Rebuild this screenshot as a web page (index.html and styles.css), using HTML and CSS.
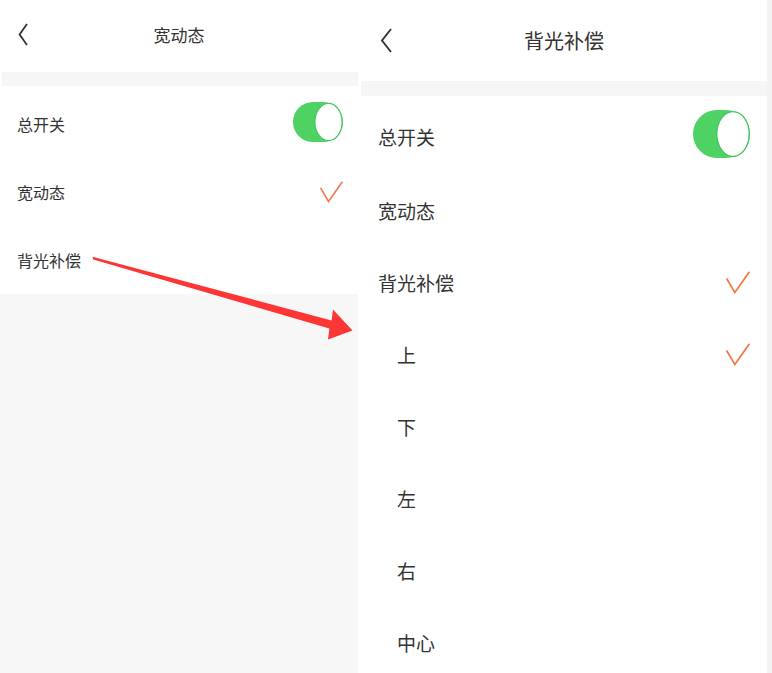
FILE: index.html
```html
<!DOCTYPE html>
<html lang="zh-CN">
<head>
<meta charset="utf-8">
<title>宽动态 / 背光补偿</title>
<link rel="stylesheet" href="styles.css">
</head>
<body>
<div class="page">
  <section class="panel panel-left">
    <header class="header">
      <svg class="back" width="10" height="23" viewBox="0 0 10 23"><polyline points="9,1 1.6,11.5 9,22" fill="none" stroke="#333" stroke-width="1.8" stroke-linejoin="miter"/></svg>
      <h1 class="title">宽动态</h1>
      <span></span>
    </header>
    <div class="band"></div>
    <ul class="list">
      <li class="row row-first">
        <span class="label">总开关</span>
        <svg width="50" height="40" viewBox="0 0 50 40"><rect x="0" y="0" width="50" height="40" rx="20" fill="#4fd264"/><ellipse cx="35.5" cy="20" rx="13.6" ry="18.6" fill="#fff" stroke="#43c55a" stroke-width="1.2"/></svg>
      </li>
      <li class="row">
        <span class="label">宽动态</span>
        <svg width="23" height="22" viewBox="0 0 23 22"><polyline points="0.6,7 8.5,20.5 22.4,0.8" fill="none" stroke="#f07a4c" stroke-width="1.6"/></svg>
      </li>
      <li class="row">
        <span class="label">背光补偿</span>
      </li>
    </ul>
    <div class="rest"></div>
  </section>

  <section class="panel panel-right">
    <header class="header">
      <svg class="back" width="12" height="25" viewBox="0 0 12 25"><polyline points="11,1 2,12.5 11,24" fill="none" stroke="#333" stroke-width="1.9" stroke-linejoin="miter"/></svg>
      <h1 class="title">背光补偿</h1>
      <span></span>
    </header>
    <div class="band"></div>
    <ul class="list">
      <li class="row row-first">
        <span class="label">总开关</span>
        <svg class="switch" width="57" height="48" viewBox="0 0 57 48"><rect x="0" y="0" width="57" height="48" rx="24" fill="#4fd264"/><ellipse cx="40" cy="24" rx="16.2" ry="22.4" fill="#fff" stroke="#43c55a" stroke-width="1.3"/></svg>
      </li>
      <li class="row">
        <span class="label">宽动态</span>
      </li>
      <li class="row">
        <span class="label">背光补偿</span>
        <svg width="24" height="23" viewBox="0 0 24 23"><polyline points="0.6,7.5 8.8,21.5 23.4,0.8" fill="none" stroke="#f07a4c" stroke-width="1.7"/></svg>
      </li>
      <li class="row sub">
        <span class="label">上</span>
        <svg width="24" height="23" viewBox="0 0 24 23"><polyline points="0.6,7.5 8.8,21.5 23.4,0.8" fill="none" stroke="#f07a4c" stroke-width="1.7"/></svg>
      </li>
      <li class="row sub"><span class="label">下</span></li>
      <li class="row sub"><span class="label">左</span></li>
      <li class="row sub"><span class="label">右</span></li>
      <li class="row sub"><span class="label">中心</span></li>
    </ul>
  </section>
  <div class="strip"></div>
</div>

<svg class="arrow" width="772" height="673" viewBox="0 0 772 673">
  <polygon points="92.5,256.8 331.6,320.4 333,309.5 352.5,330.5 328,339.5 329.4,328.4 93.2,259.6" fill="#fc3535"/>
</svg>
</body>
</html>
```

FILE: styles.css
```css
* {
  box-sizing: border-box;
}

html, body {
  margin: 0;
  padding: 0;
  background: #ffffff;
}

body {
  font-family: "Noto Sans CJK SC", "Noto Sans", sans-serif;
  color: #333333;
  width: 772px;
  height: 673px;
  overflow: hidden;
  position: relative;
}

.page {
  display: flex;
  height: 673px;
  gap: 3px;
}

.panel {
  display: flex;
  flex-direction: column;
  background: #ffffff;
  overflow: hidden;
}

.panel > * {
  flex-shrink: 0;
}

.panel-left {
  width: 358px;
}

.panel-right {
  width: 406px;
}

.strip {
  width: 5px;
  margin-left: -3px;
  background: #f3f3f3;
}

.header {
  display: grid;
  grid-template-columns: 1fr auto 1fr;
  align-items: center;
}

.title {
  margin: 0;
  font-weight: 400;
  color: #333333;
  white-space: nowrap;
}

.back {
  display: block;
}

.panel-left .header {
  height: 72px;
  padding: 0 18px 4px 18px;
}

.panel-left .title {
  font-size: 17px;
}

.panel-right .header {
  height: 81px;
  padding: 0 19px 1px 19px;
}

.panel-right .title {
  font-size: 20px;
}

.band {
  background: #f6f6f6;
}

.panel-left .band {
  height: 14px;
  margin-left: 2px;
}

.panel-right .band {
  height: 15px;
}

.list {
  list-style: none;
  margin: 0;
  padding: 0;
}

.row {
  display: flex;
  align-items: center;
  justify-content: space-between;
}

.label {
  color: #333333;
  white-space: nowrap;
}

.panel-left .row {
  height: 68px;
  padding: 0 15px 0 17px;
  font-size: 16px;
}

.panel-left .row-first {
  height: 72px;
}

.panel-left .row-first .label {
  padding-top: 4px;
}

.panel-right .list {
  padding-top: 2px;
}

.panel-right .row {
  height: 72px;
  padding: 0 17px;
  font-size: 19px;
}

.panel-right .row-first {
  height: 76px;
}

.panel-right .switch {
  margin-bottom: 4px;
}

.panel-right .row.sub {
  padding-left: 36px;
}

.rest {
  flex: 1;
  background: #f7f7f7;
}

.arrow {
  position: absolute;
  left: 0;
  top: 0;
  pointer-events: none;
}
```
